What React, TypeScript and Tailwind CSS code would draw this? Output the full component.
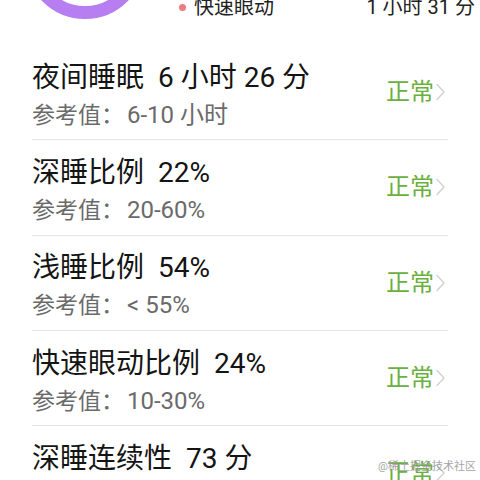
const rows = [
  { name: "夜间睡眠", value: "6 小时 26 分", ref: "6-10 小时" },
  { name: "深睡比例", value: "22%", ref: "20-60%" },
  { name: "浅睡比例", value: "54%", ref: "< 55%" },
  { name: "快速眼动比例", value: "24%", ref: "10-30%" },
  { name: "深睡连续性", value: "73 分", ref: "" },
];

function Chevron() {
  return (
    <svg width="11" height="18" viewBox="0 0 11 18" fill="none" className="ml-[1px]">
      <path d="M2 1.5 L9 9 L2 16.5" stroke="#cfcfcf" strokeWidth="1.3" strokeLinecap="round" strokeLinejoin="round" />
    </svg>
  );
}

export default function App() {
  return (
    <div
      className="relative w-[480px] h-[480px] overflow-hidden bg-white"
      style={{ fontFamily: 'Roboto, "Noto Sans CJK SC", sans-serif' }}
    >
      {/* top of the sleep ring + legend */}
      <div className="flex items-start h-[45px] overflow-hidden">
        <svg width="170" height="20" viewBox="0 0 170 20" className="shrink-0">
          <circle cx="85" cy="-41" r="53.5" fill="none" stroke="#b67ef0" strokeWidth="13" />
        </svg>
        <div className="flex items-center mt-[-3px] ml-[9px]">
          <span className="w-[7px] h-[7px] rounded-full bg-[#ef7b7f] mr-[8px]" />
          <span className="text-[20px] leading-[20px] text-[#222]">快速眼动</span>
        </div>
        <span className="ml-auto mr-[5px] mt-[-3px] text-[20px] leading-[20px] text-[#222]">1 小时 31 分</span>
      </div>

      <div className="ml-[32px] w-[416px]">
        {rows.map((r) => (
          <div key={r.name} className="flex items-center h-[95.3px] border-b border-[#e6e6e6]">
            <div className="flex flex-col pt-[6px]">
              <div className="text-[28px] leading-[36px] text-[#141414]">
                {r.name}
                <span className="ml-[14px]">{r.value}</span>
              </div>
              <div className="mt-[4px] text-[23px] leading-[30px] text-[#6a6a6a]">
                参考值：<span className="ml-[3px] text-[24px]">{r.ref}</span>
              </div>
            </div>
            <div className="ml-auto flex items-center mr-[2px]">
              <span className="text-[24px] leading-[28px] text-[#69b03e]">正常</span>
              <Chevron />
            </div>
          </div>
        ))}
      </div>

      <span className="absolute right-[4px] bottom-[7px] text-[11px] leading-[12px] text-[#9c9c9c] opacity-90">
        @稀土掘金技术社区
      </span>
    </div>
  );
}
